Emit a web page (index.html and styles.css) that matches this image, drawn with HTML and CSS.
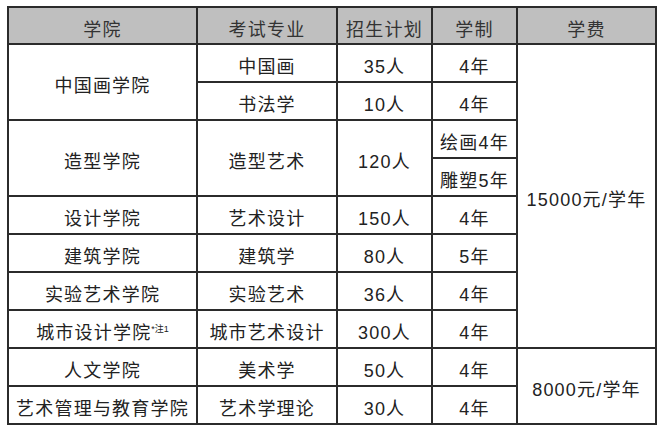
FILE: index.html
```html
<!DOCTYPE html>
<html lang="zh">
<head>
<meta charset="utf-8">
<link rel="stylesheet" href="styles.css">
</head>
<body>
<table class="plan">
  <colgroup>
    <col class="c1"><col class="c2"><col class="c3"><col class="c4"><col class="c5">
  </colgroup>
  <thead>
    <tr class="head">
      <th>学院</th><th>考试专业</th><th>招生计划</th><th>学制</th><th>学费</th>
    </tr>
  </thead>
  <tbody>
    <tr>
      <td rowspan="2">中国画学院</td><td>中国画</td><td>35人</td><td>4年</td>
      <td rowspan="8" class="fee">15000元/学年</td>
    </tr>
    <tr><td>书法学</td><td>10人</td><td>4年</td></tr>
    <tr>
      <td rowspan="2">造型学院</td><td rowspan="2">造型艺术</td><td rowspan="2">120人</td><td>绘画4年</td>
    </tr>
    <tr><td>雕塑5年</td></tr>
    <tr><td>设计学院</td><td>艺术设计</td><td>150人</td><td>4年</td></tr>
    <tr><td>建筑学院</td><td>建筑学</td><td>80人</td><td>5年</td></tr>
    <tr><td>实验艺术学院</td><td>实验艺术</td><td>36人</td><td>4年</td></tr>
    <tr><td>城市设计学院<sup class="note">*注1</sup></td><td>城市艺术设计</td><td>300人</td><td>4年</td></tr>
    <tr>
      <td>人文学院</td><td>美术学</td><td>50人</td><td>4年</td>
      <td rowspan="2" class="fee">8000元/学年</td>
    </tr>
    <tr><td>艺术管理与教育学院</td><td>艺术学理论</td><td>30人</td><td>4年</td></tr>
  </tbody>
</table>
</body>
</html>
```

FILE: styles.css
```css
html, body {
  margin: 0;
  padding: 0;
  background: #ffffff;
}

body {
  padding: 6px 0 0 7px;
}

.plan {
  border-collapse: separate;
  border-spacing: 0;
  table-layout: fixed;
  width: 650px;
  border-top: 2px solid #2b2b2b;
  border-left: 2px solid #2b2b2b;
  font-family: "Liberation Sans", "Noto Sans CJK SC", sans-serif;
  font-size: 18px;
  color: #222222;
}

.c1 { width: 189px; }
.c2 { width: 140px; }
.c3 { width: 95px; }
.c4 { width: 85px; }
.c5 { width: 139px; }

.plan th,
.plan td {
  border-right: 2px solid #2b2b2b;
  border-bottom: 2px solid #2b2b2b;
  padding: 4px 0 0 0;
  text-align: center;
  vertical-align: middle;
  letter-spacing: 1.2px;
  white-space: nowrap;
  font-weight: normal;
  box-sizing: border-box;
}

.head th {
  background: #bfbfbf;
  height: 37px;
  color: #333333;
}

.plan tbody tr {
  height: 38px;
}

.note {
  font-size: 9px;
  letter-spacing: 0;
  vertical-align: 7px;
  line-height: 0;
}
```
